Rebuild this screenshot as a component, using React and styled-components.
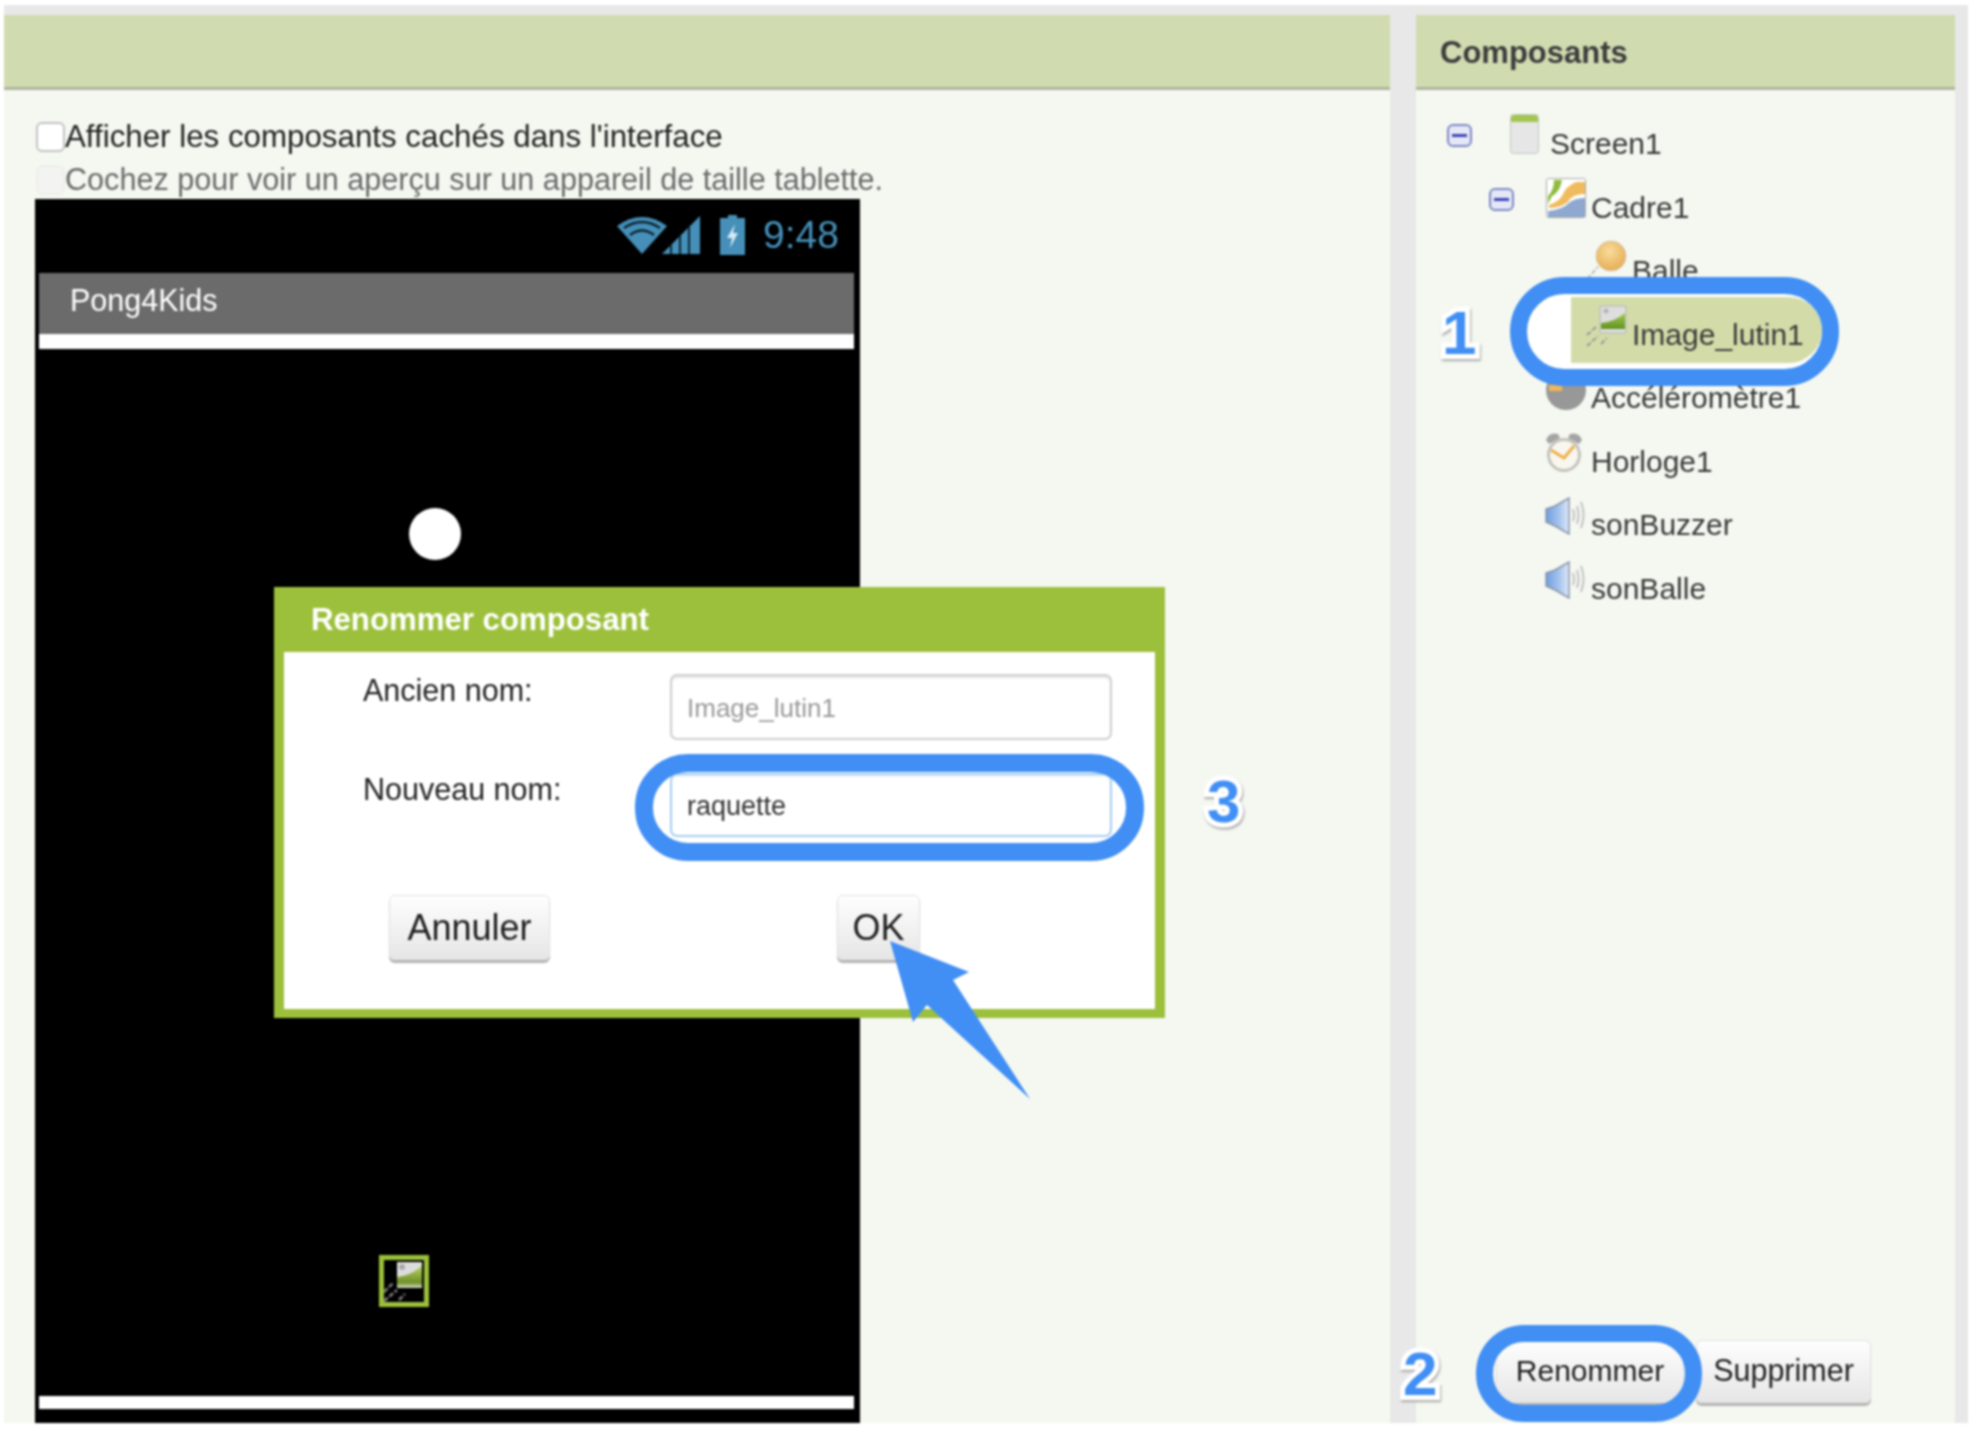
import React from 'react'
import styled, { createGlobalStyle } from 'styled-components'

const Global = createGlobalStyle`
  html, body { margin: 0; background: #fff; }
  body { font-family: "Liberation Sans", Arial, sans-serif; color: #3c3c3c; }
  * { box-sizing: border-box; }
`

const Page = styled.div`
  width: 1984px;
  height: 1438px;
  padding: 5px 16px 15px 4px;
  overflow: hidden;
  filter: blur(0.9px);
`
const Frame = styled.div`
  height: 100%;
  display: flex;
  gap: 26px;
  padding: 10px 13px 0 0;
  background: #e8e8e8;
`
const Panel = styled.section`
  flex: 0 0 ${p => p.$width}px;
  display: flex;
  flex-direction: column;
  background: #f5f8f1;
  position: relative;
`
const PanelHeader = styled.header`
  height: 75px;
  flex: none;
  padding: 3px 0 0 24px;
  display: flex;
  align-items: center;
  background: #d0dbb0;
  border-bottom: 3px solid #b0b4a0;
  font-weight: 700;
  font-size: 31px;
  color: #3c3c3c;
`
const ViewerBody = styled.div`
  flex: 1;
  min-height: 0;
  padding: 25px 0 0 31px;
  display: flex;
  flex-direction: column;
`
const CheckRow = styled.label`
  height: ${p => p.$height}px;
  flex: none;
  display: flex;
  align-items: center;
  padding-top: ${p => (p.$muted ? 2 : 0)}px;
  font-size: ${p => (p.$muted ? 30.6 : 31.3)}px;
  color: ${p => (p.$muted ? '#6a6a6a' : '#222')};
`
const CheckBox = styled.span`
  width: 29px;
  height: 30px;
  margin-left: 1px;
  border-radius: 6px;
  background: ${p => (p.$muted ? '#f3f3f1' : '#fff')};
  border: 2px solid ${p => (p.$muted ? '#eeeeea' : '#c2c2c2')};
`
const Phone = styled.div`
  width: 825px;
  flex: 1;
  padding: 0 6px 14px 4px;
  display: flex;
  flex-direction: column;
  background: #000;
  position: relative;
`
const StatusBar = styled.div`
  height: 74px;
  flex: none;
  display: flex;
  align-items: center;
  justify-content: flex-end;
  padding: 0 15px 2px 0;
  color: #458fb8;
  font-size: 39px;
`
const StatusIcon = styled.svg`
  display: block;
  margin-right: ${p => p.$gap}px;
`
const AppTitle = styled.div`
  height: 61px;
  flex: none;
  display: flex;
  align-items: center;
  padding: 0 0 7px 31px;
  background: #6b6b6b;
  color: #fff;
  font-size: 30.5px;
`
const WhiteStrip = styled.div`
  height: ${p => p.$height}px;
  flex: none;
  background: #fff;
`
const Canvas = styled.div`
  flex: 1;
  position: relative;
`
const Ball = styled.div`
  position: absolute;
  left: 370px;
  top: 159px;
  width: 52px;
  height: 52px;
  border-radius: 50%;
  background: #fff;
`
const Sprite = styled.div`
  position: absolute;
  left: 340px;
  top: 906px;
  width: 50px;
  height: 52px;
  border: 5px solid #9bbf3b;
`
const SpriteArt = styled.svg`
  display: block;
`
const Dialog = styled.div`
  position: absolute;
  left: 239px;
  top: 388px;
  width: 891px;
  height: 431px;
  padding: 0 10px 9px;
  display: flex;
  flex-direction: column;
  background: #9cc03c;
`
const DialogTitle = styled.div`
  height: 65px;
  flex: none;
  display: flex;
  align-items: center;
  padding: 0 0 0 27px;
  color: #fff;
  font-weight: 700;
  font-size: 31.2px;
`
const DialogBody = styled.div`
  flex: 1;
  background: #fff;
  padding: 22px 43px 0 79px;
`
const FormRow = styled.div`
  display: grid;
  grid-template-columns: 307px 442px;
  margin-bottom: 33px;
  height: ${p => p.$height}px;
`
const FormLabel = styled.div`
  font-size: 30.5px;
  line-height: 32px;
  color: #222;
`
const TextBox = styled.div`
  display: flex;
  align-items: center;
  padding: 2px 0 0 15px;
  border-radius: 7px;
  background: #fff;
  font-size: ${p => (p.$active ? 27 : 26)}px;
  color: ${p => (p.$active ? '#333' : '#999')};
  border: 2px solid ${p => (p.$active ? '#a8cdf0' : '#cfcfcf')};
  box-shadow: inset 0 2px 2px ${p => (p.$active ? '#e6f0fa' : '#e4e4e4')};
`
const DialogButtons = styled.div`
  display: flex;
  gap: 287px;
  padding: 25px 0 0 26px;
`
const Button = styled.div`
  height: ${p => p.$height}px;
  width: ${p => p.$width}px;
  display: flex;
  align-items: center;
  justify-content: center;
  padding-bottom: ${p => p.$lift || 0}px;
  border-radius: 6px;
  border: 1px solid #e2e2e2;
  background: linear-gradient(#fefefe, #e6e6e6);
  box-shadow: 0 3px 1px #b4b4b4;
  font-size: ${p => p.$size}px;
  color: #1e1e1e;
`
const Ring = styled.div`
  position: absolute;
  left: ${p => p.$left}px;
  top: ${p => p.$top}px;
  width: ${p => p.$width}px;
  height: ${p => p.$height}px;
  border: ${p => p.$thick}px solid #418ff4;
  border-radius: ${p => p.$radius}px;
  background: ${p => (p.$fill ? '#fff' : 'transparent')};
  z-index: ${p => (p.$fill ? 1 : 'auto')};
`
const Sticker = styled.div`
  position: absolute;
  left: ${p => p.$left}px;
  top: ${p => p.$top}px;
  z-index: 3;
  font-weight: 700;
  font-size: ${p => p.$size}px;
  line-height: 1;
  color: #418ff4;
  -webkit-text-stroke: 10px #fff;
  paint-order: stroke fill;
  filter: drop-shadow(1px 2px 1px #aaa);
`
const Pointer = styled.svg`
  position: absolute;
  left: 610px;
  top: 350px;
  overflow: visible;
`
const TreeList = styled.div`
  flex: 1;
  padding-top: 22px;
`
const TreeRow = styled.div`
  height: 63.5px;
  display: flex;
  align-items: flex-start;
  padding-left: ${p => p.$indent}px;
  position: ${p => (p.$selected ? 'relative' : 'static')};
  z-index: ${p => (p.$selected ? 2 : 'auto')};
  ${p => p.$selected && `
    &::before {
      content: '';
      position: absolute;
      left: 155px;
      top: -6px;
      width: 251px;
      height: 66px;
      border-radius: 0 33px 33px 0;
      background: #d3dca8;
      z-index: -1;
    }
  `}
`
const Toggle = styled.span`
  flex: none;
  width: 25px;
  height: 23px;
  margin: 12px ${p => p.$gap}px 0 0;
  border: 2px solid #7f87c4;
  border-radius: 6px;
  background: #e4e7f5;
  display: flex;
  align-items: center;
  justify-content: center;
  &::after {
    content: '';
    width: 15px;
    height: 3px;
    background: #3c45b8;
  }
`
const NodeIcon = styled.svg`
  flex: none;
  display: block;
  overflow: visible;
  margin: 2px ${p => p.$gap}px 0 0;
`
const NodeName = styled.span`
  font-size: 30px;
  line-height: 64px;
  color: #383838;
  white-space: nowrap;
`
const ButtonBar = styled.div`
  position: relative;
  flex: none;
  display: flex;
  gap: 12px;
  padding: 0 0 20px 80px;
`

const Speaker = ({ gap }) => (
  <NodeIcon $gap={gap} width="40" height="40" viewBox="0 0 40 40">
    <defs>
      <linearGradient id="cone" x1="0" y1="0" x2="1" y2="0">
        <stop offset="0" stopColor="#6f9ede" />
        <stop offset="0.6" stopColor="#a9c6ee" />
        <stop offset="1" stopColor="#dfe9f8" />
      </linearGradient>
    </defs>
    <path d="M0 14 L9 11 L23 3 L23 39 L9 31 L0 27 Z" fill="url(#cone)" stroke="#8a94a8" strokeWidth="1.5" />
    <path d="M27 14 Q29 20 27 26 M31 11 Q34 20 31 29 M35 7 Q40 20 35 33" fill="none" stroke="#c2c2c2" strokeWidth="2" />
  </NodeIcon>
)

const SpriteGlyph = ({ gap = 0 }) => (
  <NodeIcon $gap={gap} width="40" height="40" viewBox="0 0 40 40">
    <defs>
      <linearGradient id="meadow" x1="0" y1="0" x2="0" y2="1">
        <stop offset="0" stopColor="#a4ca4e" />
        <stop offset="1" stopColor="#5f9322" />
      </linearGradient>
    </defs>
    <rect x="14" y="1" width="26" height="27" rx="1" fill="#dedede" stroke="#b4b4b4" />
    <path d="M15 24 L15 18 Q28 17 39 8 L39 24 Z" fill="url(#meadow)" />
    <circle cx="20" cy="6" r="2.5" fill="#b4b4b4" />
    <path d="M1 30 L10 22 M1 41 L12 31 M15 39 L21 33" stroke="#999" strokeWidth="2" strokeDasharray="5 2" fill="none" />
  </NodeIcon>
)

const App = () => {
  return (
    <Page>
      <Global />
      <Frame>
        <Panel $width={1386}>
          <PanelHeader />
          <ViewerBody>
            <CheckRow $height={43}>
              <CheckBox />
              Afficher les composants cachés dans l'interface
            </CheckRow>
            <CheckRow $height={41} $muted>
              <CheckBox $muted />
              Cochez pour voir un aperçu sur un appareil de taille tablette.
            </CheckRow>
            <Phone>
              <StatusBar>
                <StatusIcon $gap={-5} width="50" height="38" viewBox="0 0 50 38">
                  <path d="M0 10 Q25 -8 50 10 L25 38 Z" fill="#458fb8" />
                  <path d="M7 12 Q25 0 43 12 M13 19 Q25 10 37 19" fill="none" stroke="#0b2430" strokeWidth="2.5" />
                </StatusIcon>
                <StatusIcon $gap={20} width="38" height="38" viewBox="0 0 38 38">
                  <path d="M0 38 L38 0 L38 38 Z" fill="#458fb8" />
                  <path d="M9 28 L9 38 M18 19 L18 38 M27 10 L27 38" stroke="#0b2430" strokeWidth="2" />
                </StatusIcon>
                <StatusIcon $gap={18} width="25" height="40" viewBox="0 0 25 40">
                  <path d="M8 0 L17 0 L17 3 L25 3 L25 40 L0 40 L0 3 L8 3 Z" fill="#458fb8" />
                  <path d="M15 9 L7 23 L12 23 L10 33 L18 18 L13 18 Z" fill="#d5eaf5" />
                </StatusIcon>
                9:48
              </StatusBar>
              <AppTitle>Pong4Kids</AppTitle>
              <WhiteStrip $height={15} />
              <Canvas>
                <Ball />
                <Sprite>
                  <SpriteArt width="40" height="42" viewBox="0 0 40 42">
                    <defs>
                      <linearGradient id="spriteGreen" x1="0" y1="0" x2="0" y2="1">
                        <stop offset="0" stopColor="#b4d65a" />
                        <stop offset="0.75" stopColor="#6f8f2c" />
                        <stop offset="1" stopColor="#d8dcc8" />
                      </linearGradient>
                    </defs>
                    <rect x="13" y="2" width="25" height="26" fill="#dcdcdc" />
                    <path d="M13 28 L13 17 Q26 16 38 6 L38 28 Z" fill="url(#spriteGreen)" />
                    <circle cx="18" cy="7" r="3" fill="#aaa" />
                    <path d="M0 32 L9 23 M0 41 L13 30 M15 40 L21 34" stroke="#7c7c7c" strokeWidth="2.5" strokeDasharray="5 2" fill="none" />
                  </SpriteArt>
                </Sprite>
              </Canvas>
              <WhiteStrip $height={13} />
              <Dialog>
                <DialogTitle>Renommer composant</DialogTitle>
                <DialogBody>
                  <FormRow $height={66}>
                    <FormLabel>Ancien nom:</FormLabel>
                    <TextBox>Image_lutin1</TextBox>
                  </FormRow>
                  <FormRow $height={64}>
                    <FormLabel>Nouveau nom:</FormLabel>
                    <TextBox $active>raquette</TextBox>
                  </FormRow>
                  <DialogButtons>
                    <Button $width={161} $height={65} $size={36}>Annuler</Button>
                    <Button $width={83} $height={65} $size={36}>OK</Button>
                  </DialogButtons>
                </DialogBody>
                <Ring $left={361} $top={167} $width={509} $height={107} $thick={18} $radius={53} />
                <Sticker $left={933} $top={185} $size={60}>3</Sticker>
                <Pointer width="160" height="170" viewBox="0 0 160 170">
                  <path d="M6 4 L85 35 L69 43 L146 162 L43 68 L29 85 Z" fill="#418ff4" />
                </Pointer>
              </Dialog>
            </Phone>
          </ViewerBody>
        </Panel>
        <Panel $width={539}>
          <PanelHeader>Composants</PanelHeader>
          <TreeList>
            <TreeRow $indent={31}>
              <Toggle $gap={38} />
              <NodeIcon $gap={11} width="29" height="40" viewBox="0 0 29 40">
                <rect x="0.5" y="0.5" width="28" height="39" rx="3" fill="#e6e6e6" stroke="#c6c6c6" />
                <path d="M1 4 Q1 1 4 1 L25 1 Q28 1 28 4 L28 8 L1 8 Z" fill="#a3c653" />
              </NodeIcon>
              <NodeName>Screen1</NodeName>
            </TreeRow>
            <TreeRow $indent={73}>
              <Toggle $gap={32} />
              <NodeIcon $gap={5} width="40" height="40" viewBox="0 0 40 40">
                <rect x="0.5" y="0.5" width="39" height="39" rx="2" fill="#fff" stroke="#aaa" />
                <path d="M8 2 L16 2 Q14 14 6 18 L2 26 L2 18 Q8 12 8 2 Z" fill="#8fbc3f" />
                <path d="M30 4 L39 4 L39 16 Q26 16 22 24 Q14 30 3 30 L3 27 Q12 24 16 18 Q20 8 30 4 Z" fill="#f0bb5f" />
                <path d="M2 39 L2 33 Q16 32 24 24 Q30 20 39 20 L39 39 Z" fill="#8fa8d0" />
              </NodeIcon>
              <NodeName>Cadre1</NodeName>
            </TreeRow>
            <TreeRow $indent={170}>
              <NodeIcon $gap={6} width="40" height="40" viewBox="0 0 40 40">
                <defs>
                  <radialGradient id="ballFill" cx="0.45" cy="0.35" r="0.7">
                    <stop offset="0" stopColor="#f9dc9c" />
                    <stop offset="1" stopColor="#e6a94f" />
                  </radialGradient>
                </defs>
                <path d="M1 38 L12 26" stroke="#bbb" strokeWidth="2" strokeDasharray="5 2" />
                <circle cx="25" cy="15" r="15" fill="url(#ballFill)" stroke="#cfc6b0" />
              </NodeIcon>
              <NodeName>Balle</NodeName>
            </TreeRow>
            <TreeRow $indent={170} $selected>
              <SpriteGlyph gap={6} />
              <NodeName>Image_lutin1</NodeName>
            </TreeRow>
            <TreeRow $indent={130}>
              <NodeIcon $gap={5} width="40" height="40" viewBox="0 0 40 40">
                <ellipse cx="20" cy="22" rx="20" ry="20" fill="#989898" />
                <rect x="3" y="17" width="13" height="6" fill="#efb65a" />
              </NodeIcon>
              <NodeName>Accéléromètre1</NodeName>
            </TreeRow>
            <TreeRow $indent={130}>
              <NodeIcon $gap={5} width="40" height="40" viewBox="0 0 40 40">
                <path d="M0 8 Q3 0 12 2 L14 6 L3 12 Z M36 8 Q33 0 24 2 L22 6 L33 12 Z" fill="#a4a4a4" />
                <circle cx="18" cy="23" r="15.5" fill="#f8f6ef" stroke="#c4c4bc" strokeWidth="3" />
                <path d="M5 18 L18 26 L28 14" fill="none" stroke="#eeb04e" strokeWidth="3" />
              </NodeIcon>
              <NodeName>Horloge1</NodeName>
            </TreeRow>
            <TreeRow $indent={130}>
              <Speaker gap={5} />
              <NodeName>sonBuzzer</NodeName>
            </TreeRow>
            <TreeRow $indent={130}>
              <Speaker gap={5} />
              <NodeName>sonBalle</NodeName>
            </TreeRow>
          </TreeList>
          <Ring $left={94} $top={262} $width={329} $height={109} $thick={17} $radius={55} $fill />
          <Sticker $left={26} $top={287} $size={62}>1</Sticker>
          <ButtonBar>
            <Button $width={188} $height={63} $size={30} $lift={2}>Renommer</Button>
            <Button $width={175} $height={63} $size={30.5} $lift={2}>Supprimer</Button>
            <Ring $left={60} $top={-15} $width={226} $height={97} $thick={17} $radius={48} />
            <Sticker $left={-13} $top={3} $size={62}>2</Sticker>
          </ButtonBar>
        </Panel>
      </Frame>
    </Page>
  )
}

export default App
